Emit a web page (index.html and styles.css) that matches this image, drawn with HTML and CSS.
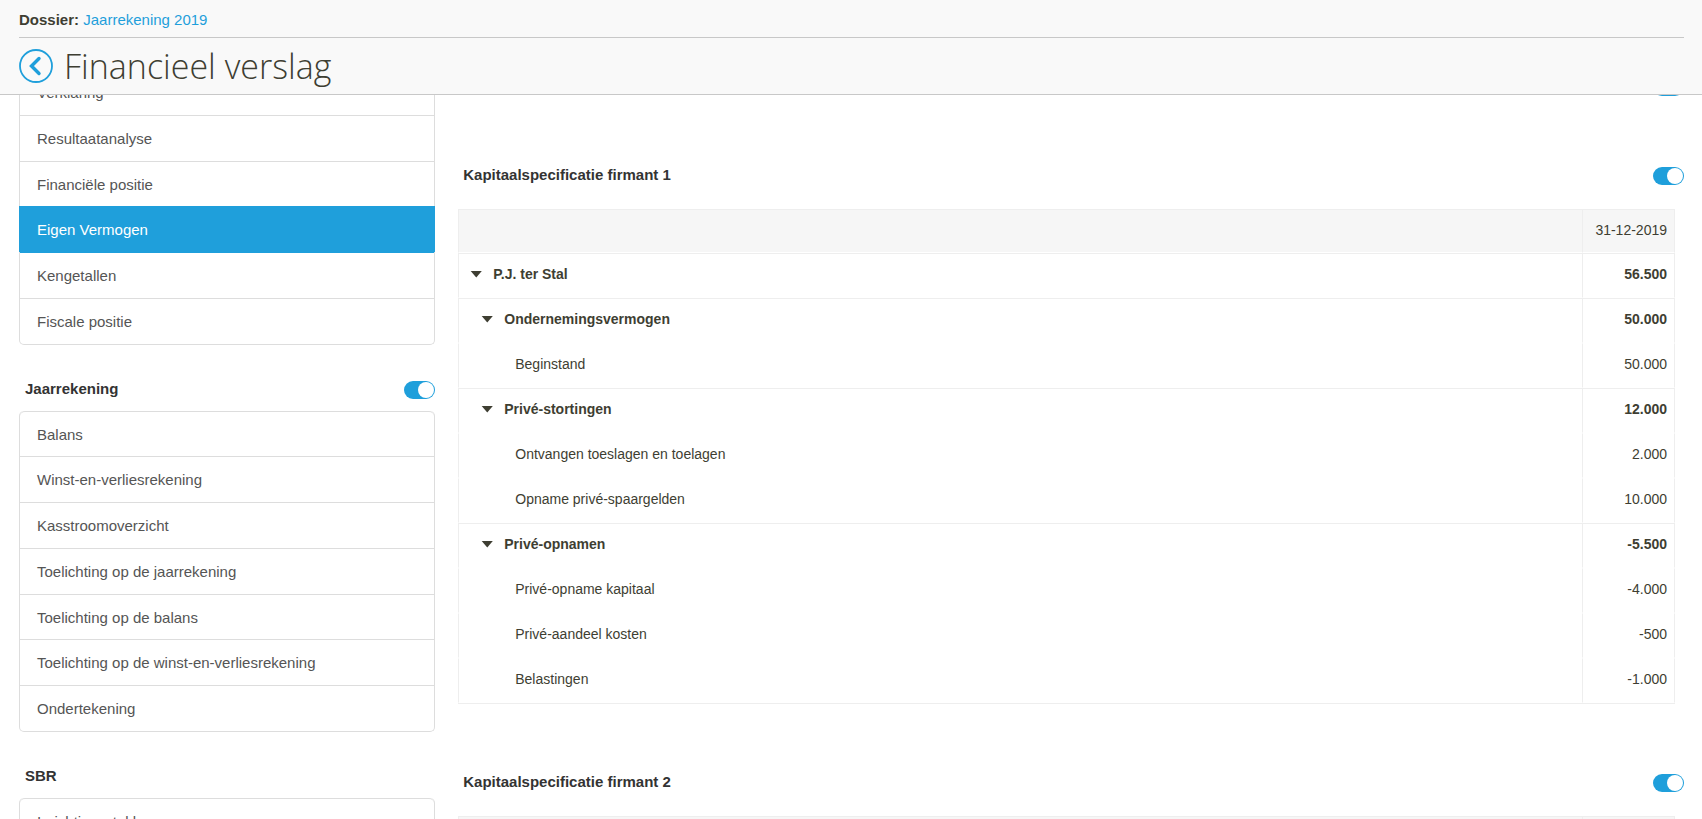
FILE: index.html
```html
<!DOCTYPE html>
<html lang="nl">
<head>
    <meta charset="UTF-8">
    <meta name="viewport" content="width=device-width, initial-scale=1.0">
    <title>Financieel verslag</title>
    <link rel="stylesheet" href="styles.css">
</head>
<body>
    <header class="page-header">
        <div class="dossier">
            <strong>Dossier:</strong> <a href="#">Jaarrekening 2019</a>
        </div>
        <div class="title-bar">
            <a href="#" class="back" aria-label="Terug">
                <svg width="34" height="34" viewBox="0 0 34 34" fill="none" stroke="currentColor">
                    <circle cx="17" cy="17" r="16" stroke-width="1.8"/>
                    <path d="M20 9.5L12.5 17L20 24.5" stroke-width="3.4" stroke-linecap="round"/>
                </svg>
            </a>
            <h1>Financieel verslag</h1>
        </div>
    </header>

    <div class="content">
        <nav class="sidebar">
            <ul class="menu">
                <li><a href="#">Verklaring</a></li>
                <li><a href="#">Resultaatanalyse</a></li>
                <li><a href="#">Financiële positie</a></li>
                <li class="active"><a href="#">Eigen Vermogen</a></li>
                <li><a href="#">Kengetallen</a></li>
                <li><a href="#">Fiscale positie</a></li>
            </ul>

            <div class="menu-head">
                <label for="jaarrekening">Jaarrekening</label>
                <input type="checkbox" class="toggle" id="jaarrekening" checked>
            </div>
            <ul class="menu">
                <li><a href="#">Balans</a></li>
                <li><a href="#">Winst-en-verliesrekening</a></li>
                <li><a href="#">Kasstroomoverzicht</a></li>
                <li><a href="#">Toelichting op de jaarrekening</a></li>
                <li><a href="#">Toelichting op de balans</a></li>
                <li><a href="#">Toelichting op de winst-en-verliesrekening</a></li>
                <li><a href="#">Ondertekening</a></li>
            </ul>

            <div class="menu-head">
                <span>SBR</span>
            </div>
            <ul class="menu">
                <li><a href="#">Inrichtingsstukken</a></li>
            </ul>
        </nav>

        <main class="main">
            <section class="block">
                <div class="block-head">
                    <input type="checkbox" class="toggle" aria-label="Kapitaal" checked>
                </div>
            </section>

            <section class="block">
                <div class="block-head">
                    <label for="firmant1">Kapitaalspecificatie firmant 1</label>
                    <input type="checkbox" class="toggle" id="firmant1" checked>
                </div>
                <table class="spec">
                    <thead>
                        <tr><th></th><th class="amount">31-12-2019</th></tr>
                    </thead>
                    <tbody>
                        <tr class="total level-1">
                            <td><button type="button" class="caret" aria-label="Inklappen"></button>P.J. ter Stal</td>
                            <td class="amount">56.500</td>
                        </tr>
                        <tr class="total level-2">
                            <td><button type="button" class="caret" aria-label="Inklappen"></button>Ondernemingsvermogen</td>
                            <td class="amount">50.000</td>
                        </tr>
                        <tr class="level-3"><td>Beginstand</td><td class="amount">50.000</td></tr>
                        <tr class="total level-2">
                            <td><button type="button" class="caret" aria-label="Inklappen"></button>Privé-stortingen</td>
                            <td class="amount">12.000</td>
                        </tr>
                        <tr class="level-3"><td>Ontvangen toeslagen en toelagen</td><td class="amount">2.000</td></tr>
                        <tr class="level-3"><td>Opname privé-spaargelden</td><td class="amount">10.000</td></tr>
                        <tr class="total level-2">
                            <td><button type="button" class="caret" aria-label="Inklappen"></button>Privé-opnamen</td>
                            <td class="amount">-5.500</td>
                        </tr>
                        <tr class="level-3"><td>Privé-opname kapitaal</td><td class="amount">-4.000</td></tr>
                        <tr class="level-3"><td>Privé-aandeel kosten</td><td class="amount">-500</td></tr>
                        <tr class="level-3"><td>Belastingen</td><td class="amount">-1.000</td></tr>
                    </tbody>
                </table>
            </section>

            <section class="block">
                <div class="block-head">
                    <label for="firmant2">Kapitaalspecificatie firmant 2</label>
                    <input type="checkbox" class="toggle" id="firmant2" checked>
                </div>
                <table class="spec">
                    <thead>
                        <tr><th></th><th class="amount">31-12-2019</th></tr>
                    </thead>
                </table>
            </section>
        </main>
    </div>
</body>
</html>
```
FILE: styles.css
```css
* {
    box-sizing: border-box;
}

html {
    height: 100%;
    overflow: hidden;
}

body {
    margin: 0;
    height: 100%;
    overflow: hidden;
    font-family: "Liberation Sans", Arial, sans-serif;
    font-size: 15px;
    color: #3e3e32;
    background-color: #fff;
}

a {
    color: #1f9fdb;
    text-decoration: none;
}

/* header */
.page-header {
    position: fixed;
    top: 0;
    left: 0;
    right: 0;
    z-index: 10;
    padding: 0 18px 0 19px;
    background-color: #f9f9f9;
    border-bottom: 1px solid #c8c8c8;
}

.dossier {
    padding: 11px 0 9px;
    line-height: 17px;
    border-bottom: 1px solid #c8c8c8;
}

.title-bar {
    display: flex;
    align-items: center;
    gap: 11px;
    height: 56px;
}

.back svg {
    display: block;
}

h1 {
    margin: 0;
    font-family: "Open Sans", sans-serif;
    font-size: 34px;
    font-weight: 300;
    line-height: 48px;
}

.content {
    display: flex;
    gap: 23px;
    padding: 69px 18px 0 19px;
}

/* sidebar */
.sidebar {
    flex: 0 0 25%;
}

.menu {
    list-style: none;
    margin: 0;
    padding: 0;
    border: 1px solid #ddd;
    border-top: none;
    border-radius: 5px;
}

.menu li {
    border-top: 1px solid #ddd;
}

.menu li:first-child {
    border-radius: 5px 5px 0 0;
}

.menu a {
    display: block;
    padding: 11px 17px 9px;
    line-height: 1.65;
    color: #555;
}

.menu .active {
    margin: 0 -1px;
    background-color: #1f9fdb;
    border-color: #1f9fdb;
}

.menu .active a {
    padding-left: 18px;
    color: #fff;
}

.menu .active + li {
    border-color: #1f9fdb;
}

.menu-head {
    display: flex;
    justify-content: space-between;
    margin: 36px 0 11px;
    padding-left: 6px;
    height: 19px;
    line-height: 16px;
    font-weight: bold;
    color: #333;
}

.toggle {
    appearance: none;
    flex: none;
    margin: 0 0 0 auto;
    padding: 1px;
    width: 31px;
    height: 18px;
    border-radius: 9px;
    background-color: #ccc;
    cursor: pointer;
}

.toggle::before {
    content: "";
    display: block;
    width: 16px;
    height: 16px;
    border-radius: 50%;
    background-color: #fff;
}

.toggle:checked {
    background-color: #1f9fdb;
}

.toggle:checked::before {
    margin-left: auto;
}

/* main column */
.main {
    flex: 1;
    padding-top: 9px;
}

.block {
    margin-bottom: 70px;
}

.block-head {
    display: flex;
    padding-left: 5px;
    height: 19px;
    line-height: 16px;
    font-weight: bold;
    color: #333;
}

.spec {
    width: calc(100% - 9px);
    margin-top: 23px;
    border-collapse: separate;
    border-spacing: 0;
    border-bottom: 1px solid #eee;
    font-size: 14px;
}

.spec th,
.spec td {
    height: 45px;
    padding: 0 7px 4px 11px;
    border: 1px solid #fff;
    border-left-color: #eee;
    text-align: left;
}

.spec th {
    height: 44px;
    padding-bottom: 2px;
    border-top-color: #eee;
    background-color: #f6f6f6;
    background-clip: padding-box;
    font-weight: normal;
}

.spec th:first-child,
.spec td:first-child {
    border-right: none;
}

.spec .amount {
    width: 93px;
    border-right-color: #eee;
    text-align: right;
}

.spec .total td {
    border-top-color: #eee;
    font-weight: bold;
}

.spec .level-2 td:first-child {
    padding-left: 22px;
}

.spec .level-3 td:first-child {
    padding-left: 56px;
}

.caret {
    width: 12px;
    height: 7px;
    margin: 0 11px 0 0;
    padding: 0;
    border: none;
    background-color: #3e3e32;
    clip-path: polygon(0 0, 100% 0, 50% 100%);
    vertical-align: 1px;
    cursor: pointer;
}
```
